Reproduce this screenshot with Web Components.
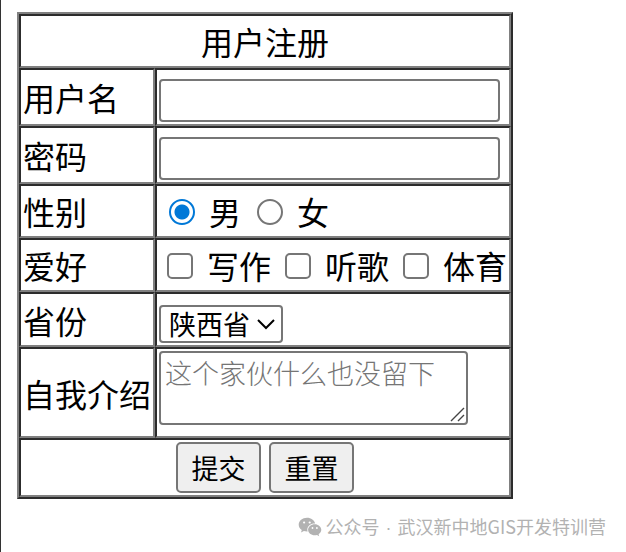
<!DOCTYPE html>
<html lang="zh-CN">
<head>
<meta charset="utf-8">
<title>用户注册</title>
<style>
  body { margin: 0; background: #fff; color: #000; font-family: "Noto Sans CJK SC", sans-serif; }
  .dot { padding: 0 2px; font-family: "Liberation Sans", sans-serif; }
</style>
</head>
<body>
<register-page>
  <register-form></register-form>
  <account-credit slot="footer">公众号 <span class="dot">·</span> 武汉新中地GIS开发特训营</account-credit>
</register-page>

<template id="register-page">
  <style>
    :host { display: flex; flex-direction: column; min-height: 100vh; box-sizing: border-box; border-left: 1px solid #333; }
    main { padding: 12px 16px 0; }
    footer { display: flex; justify-content: flex-end; padding: 14px 20px 0; }
  </style>
  <main><slot></slot></main>
  <footer><slot name="footer"></slot></footer>
</template>

<template id="account-credit">
  <style>
    :host { display: flex; align-items: center; gap: 4px; font-size: 18px; line-height: 26px; color: #b2b2b2; white-space: nowrap; }
    svg { width: 24px; height: 20px; }
  </style>
  <svg viewBox="0 0 24 20" aria-hidden="true">
    <path fill="#b2b2b2" d="M9 .8C4.400.8.7 3.900.7 7.700c0 2.200 1.200 4.100 3.100 5.400L3 15.500l2.900-1.500c1 .3 2 .5 3.100.5h.6a6 6 0 0 1-.3-1.700c0-3.500 3.300-6.200 7.300-6.200h.5C16.500 3.300 13.100.8 9 .8z"/>
    <path fill="#b2b2b2" d="M16.700 7.300c-3.700 0-6.600 2.500-6.600 5.500s2.900 5.500 6.600 5.500c.8 0 1.600-.1 2.300-.4l2.200 1.300-.6-2c1.600-1 2.700-2.600 2.700-4.400 0-3-3-5.500-6.600-5.500z"/>
    <g fill="#fff"><circle cx="6.100" cy="5.500" r="1.100"/><circle cx="11.700" cy="5.500" r="1.100"/><circle cx="14.500" cy="11" r=".9"/><circle cx="18.900" cy="11" r=".9"/></g>
  </svg>
  <span><slot></slot></span>
</template>

<template id="chevron-box">
  <style>
    :host { display: inline-block; position: relative; vertical-align: bottom; }
    svg { position: absolute; right: 8px; top: 14px; width: 18px; height: 11px; pointer-events: none; }
  </style>
  <slot></slot>
  <svg viewBox="0 0 18 11" aria-hidden="true"><path d="M1 1l8 8 8-8" fill="none" stroke="#000" stroke-width="2"/></svg>
</template>

<template id="grip-box">
  <style>
    :host { display: inline-block; position: relative; vertical-align: top; }
    svg { position: absolute; right: 3px; bottom: 3px; width: 15px; height: 15px; pointer-events: none; }
  </style>
  <slot></slot>
  <svg viewBox="0 0 15 15" aria-hidden="true"><path d="M1 14L14 1M8 14l6-6" fill="none" stroke="#444" stroke-width="1.400"/></svg>
</template>

<template id="choice-group">
  <style>
    :host { display: flex; gap: 6px; }
    label { display: flex; align-items: center; gap: 14px; }
    input { appearance: none; box-sizing: border-box; width: 26px; height: 26px; margin: 2px 0 0 8px; border: 2px solid #767676; border-radius: 5px; background: #fff; }
    input[type=radio] { border-radius: 50%; margin-left: 10px; }
    input[type=radio]:checked { border-color: #0078d7; background: radial-gradient(circle, #0078d7 7px, #fff 8px); }
    input[type=checkbox]:checked { background: #0078d7; border-color: #0078d7; }
  </style>
</template>

<template id="register-form">
  <style>
    :host { display: block; font-size: 32px; line-height: 46px; }
    form { margin: 0; }
    table { border: 2px solid; border-color: #808080 #2c2c2c #2c2c2c #808080; border-spacing: 0; font-size: 32px; white-space: nowrap; }
    th, td { box-sizing: border-box; border: 2px solid; border-color: #2c2c2c #808080 #808080 #2c2c2c; padding: 2px; font-weight: 400; text-align: left; vertical-align: bottom; }
    th { vertical-align: middle; }
    thead th, tfoot td { text-align: center; }
    .field { height: 58px; }
    .pick { height: 55px; }
    .long { height: 91px; }
    .long td { vertical-align: top; }
    label { display: block; }
    input, select, textarea { display: block; box-sizing: border-box; margin: 0; border: 2px solid #767676; border-radius: 4px; background: #fff; color: #000; font: 27px/32px "Noto Sans CJK SC", sans-serif; }
    input { width: 341px; height: 43px; padding: 2px 4px; }
    select { appearance: none; width: 124px; height: 38px; padding: 0 32px 0 8px; }
    textarea { width: 309px; height: 74px; padding: 4px; overflow: hidden; resize: none; font-weight: 300; }
    textarea::placeholder { color: #757575; }
    .actions { display: flex; justify-content: center; gap: 8px; }
    button { box-sizing: border-box; min-width: 85px; height: 51px; padding: 0 12px; border: 2px solid #767676; border-radius: 5px; background: #efefef; color: #000; font: 27px/40px "Noto Sans CJK SC", sans-serif; }
  </style>
  <form>
    <table>
      <thead><tr><th colspan="2">用户注册</th></tr></thead>
      <tbody>
        <tr class="field"><th><label for="user">用户名</label></th><td><input id="user" type="text" name="user"></td></tr>
        <tr class="field"><th><label for="pass">密码</label></th><td><input id="pass" type="password" name="pass"></td></tr>
        <tr><th>性别</th><td><choice-group type="radio" name="sex" options="男,女" value="男" aria-label="性别"></choice-group></td></tr>
        <tr><th>爱好</th><td><choice-group type="checkbox" name="hobby" options="写作,听歌,体育" aria-label="爱好"></choice-group></td></tr>
        <tr class="pick"><th><label for="province">省份</label></th><td><chevron-box><select id="province" name="province"><option>陕西省</option></select></chevron-box></td></tr>
        <tr class="long"><th><label for="bio">自我介绍</label></th><td><grip-box><textarea id="bio" name="bio" placeholder="这个家伙什么也没留下"></textarea></grip-box></td></tr>
      </tbody>
      <tfoot><tr><td colspan="2"><div class="actions"><button type="submit">提交</button><button type="reset">重置</button></div></td></tr></tfoot>
    </table>
  </form>
</template>

<script>
  class TemplateElement extends HTMLElement {
    constructor() {
      super();
      const template = document.getElementById(this.localName);
      this.attachShadow({ mode: "open" }).append(template.content.cloneNode(true));
    }
  }

  class ChoiceGroup extends TemplateElement {
    connectedCallback() {
      if (this.shadowRoot.querySelector("label")) return;
      const type = this.getAttribute("type");
      this.setAttribute("role", type === "radio" ? "radiogroup" : "group");
      for (const text of this.getAttribute("options").split(",")) {
        const label = document.createElement("label");
        const input = document.createElement("input");
        input.type = type;
        input.name = this.getAttribute("name");
        input.value = text;
        input.checked = text === this.getAttribute("value");
        label.append(input, text);
        this.shadowRoot.append(label);
      }
    }
  }

  customElements.define("choice-group", ChoiceGroup);
  customElements.define("chevron-box", class extends TemplateElement {});
  customElements.define("grip-box", class extends TemplateElement {});
  customElements.define("account-credit", class extends TemplateElement {});
  customElements.define("register-form", class extends TemplateElement {});
  customElements.define("register-page", class extends TemplateElement {});
</script>
</body>
</html>
